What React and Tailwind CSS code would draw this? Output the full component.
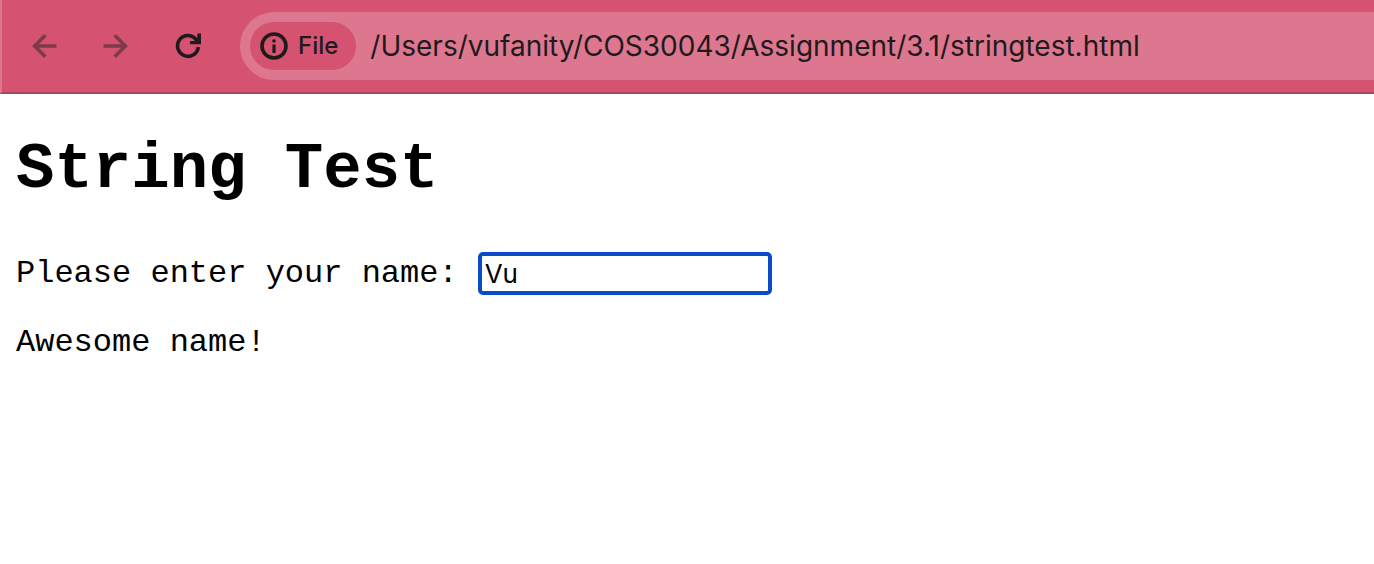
import { useState } from "react";

function NavButton({ label, className, children }) {
  return (
    <button type="button" aria-label={label} className={`flex size-8 items-center justify-center ${className}`}>
      <svg viewBox="0 0 32 32" className="size-8" fill="none" stroke="currentColor" strokeWidth="3.600">
        {children}
      </svg>
    </button>
  );
}

function Toolbar() {
  return (
    <header className="flex items-center border-b-2 border-l-2 border-b-[#a34961] border-l-[#dd7790] bg-[#d55370] py-3 pl-[26px]">
      <nav className="flex items-center gap-10 pr-9">
        <NavButton label="Back" className="text-[#7e3a49]">
          <path d="M28.400 16H7M17.300 5.300L6.600 16L17.300 26.700" />
        </NavButton>
        <NavButton label="Forward" className="text-[#7e3a49]">
          <path d="M3.600 16H25M14.700 5.300L25.400 16L14.700 26.700" />
        </NavButton>
        <NavButton label="Reload" className="text-[#1f1a1c]">
          <path d="M26.300 17A10.400 10.400 0 1 1 23.500 8.700L26 11.500" />
          <path d="M25.300 3.500H29V14.300H18V11H22L25.300 8Z" fill="currentColor" stroke="none" />
        </NavButton>
      </nav>
      <div className="flex h-17 min-w-0 flex-1 items-center gap-3.5 rounded-l-full bg-[#dd7790] pl-2.5">
        <button type="button" className="flex h-12 shrink-0 items-center gap-2 rounded-full bg-[#d55370] pr-[18px] pl-2 font-['Inter',sans-serif] text-2xl font-medium text-[#1f1a1c]">
          <svg viewBox="0 0 32 32" className="size-8" fill="none" stroke="currentColor" strokeWidth="3.600">
            <circle cx="16" cy="16" r="12" />
            <path d="M16 14.500V23" strokeWidth="3.200" />
            <circle cx="16" cy="11" r="1.800" fill="currentColor" stroke="none" />
          </svg>
          File
        </button>
        <input
          aria-label="Address"
          defaultValue="/Users/vufanity/COS30043/Assignment/3.1/stringtest.html"
          className="min-w-0 flex-1 bg-transparent font-['Inter',sans-serif] text-[28px] text-[#1f1a1c] outline-none"
        />
      </div>
    </header>
  );
}

export default function App() {
  const [name, setName] = useState("Vu");
  return (
    <div className="min-h-screen bg-white text-black">
      <Toolbar />
      <main className="px-4 pt-10 font-['Courier_New','Liberation_Mono',monospace] text-[32px] leading-9">
        <h1 className="text-[64px] leading-[72px] font-bold">String Test</h1>
        <div className="mt-[46px] flex flex-wrap items-center gap-5">
          <label htmlFor="name">Please enter your name:</label>
          <input
            id="name"
            value={name}
            onChange={(e) => setName(e.target.value)}
            className="h-[43px] w-[294px] rounded-[5px] border-4 border-[#0a4bc8] px-[3px] font-['Inter',sans-serif] text-[26px] outline-none"
          />
        </div>
        <p className="mt-[30px]">Awesome name!</p>
      </main>
    </div>
  );
}
